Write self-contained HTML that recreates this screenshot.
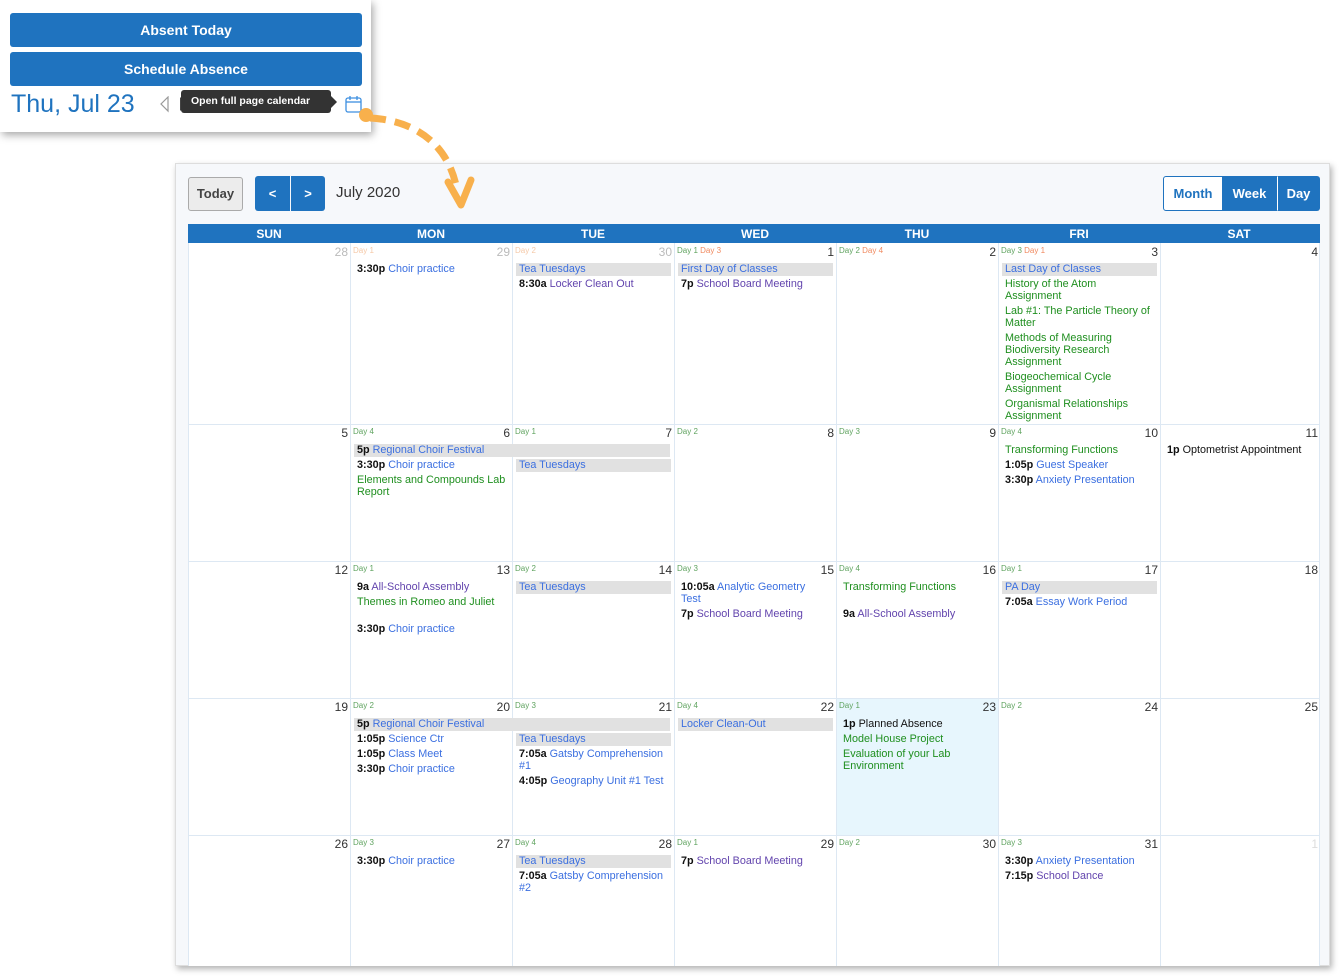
<!DOCTYPE html>
<html><head><meta charset="utf-8">
<style>
*{box-sizing:border-box;margin:0;padding:0}
body{width:1341px;height:976px;background:#fff;position:relative;overflow:hidden;font-family:"Liberation Sans",sans-serif;}
.pop{position:absolute;left:0;top:0;width:371px;height:132px;background:#fff;box-shadow:2px 3px 8px rgba(0,0,0,.35);}
.btn{position:absolute;left:10px;width:352px;height:34px;background:#1f73bf;border-radius:3px;color:#fff;font-weight:bold;font-size:14px;text-align:center;line-height:34px;}
.date{position:absolute;left:11px;top:90px;font-size:25px;color:#1f73bf;}
.tip{position:absolute;left:181px;top:90px;width:150px;height:23px;background:#333;border-radius:3px;color:#fff;font-weight:bold;font-size:10.5px;line-height:23px;padding-left:10px;}
.tip:after{content:"";position:absolute;right:-6px;top:6px;border-left:6px solid #333;border-top:6px solid transparent;border-bottom:6px solid transparent;}
.panel{position:absolute;left:175px;top:163px;width:1155px;height:803px;background:#f6f8fb;border:1px solid #ddd;box-shadow:2px 3px 6px rgba(0,0,0,.3);}
.today{position:absolute;left:188px;top:177px;width:55px;height:34px;background:#ececec;border:1px solid #aaa;border-radius:3px;font-weight:bold;font-size:13px;color:#444;text-align:center;line-height:32px;}
.nav{position:absolute;top:176px;height:35px;background:#1f73bf;color:#fff;font-weight:bold;font-size:13px;text-align:center;line-height:35px;}
.title{position:absolute;left:336px;top:184px;font-size:15px;color:#333;}
.vw{position:absolute;top:176px;height:35px;font-weight:bold;font-size:13px;text-align:center;line-height:33px;color:#fff;background:#1f73bf;border:1px solid #1f73bf;}
.hdr{position:absolute;left:188px;top:224px;width:1132px;height:19px;background:#1f73bf;}
.hdr div{position:absolute;top:0;width:162px;text-align:center;color:#fff;font-weight:bold;font-size:12px;line-height:20px;}
.grid{position:absolute;left:188px;top:243px;width:1132px;height:723px;background:#fff;}
.vl{position:absolute;top:243px;height:723px;width:1px;background:#dde8f3;}
.hl{position:absolute;left:188px;width:1132px;height:1px;background:#dde8f3;}
.n{position:absolute;font-size:12px;color:#333;text-align:right;width:40px;line-height:14px;}
.g{color:#bbb}
.d{position:absolute;font-size:8px;line-height:10px;color:#5fa35f;}
.o{color:#f08a60}.lo{color:#f5c9a8}
.e{position:absolute;font-size:10.8px;line-height:12px;width:152px;color:#3b6fe0;white-space:nowrap;margin-top:1px}
.e b{color:#111;}
.p{color:#6244ad}.k{color:#111}.gr{color:#1f8f1f;white-space:normal}
.b{position:absolute;background:#e1e1e1;height:13px;font-size:10.8px;line-height:13px;padding-left:3px;color:#3b6fe0;width:155px;margin-top:1px}
</style></head><body>

<div class="panel"></div>
<div class="today">Today</div>
<div class="nav" style="left:255px;width:35px;border-radius:3px 0 0 3px">&lt;</div>
<div class="nav" style="left:291px;width:34px;border-radius:0 3px 3px 0">&gt;</div>
<div class="title">July 2020</div>
<div class="vw" style="left:1163px;width:60px;background:#fff;color:#1f73bf;border-radius:3px 0 0 3px">Month</div>
<div class="vw" style="left:1222px;width:55px">Week</div>
<div class="vw" style="left:1277px;width:43px;border-left:1px solid #fff;border-radius:0 3px 3px 0">Day</div>

<div class="hdr">
<div style="left:0">SUN</div><div style="left:162px">MON</div><div style="left:324px">TUE</div><div style="left:486px">WED</div><div style="left:648px">THU</div><div style="left:810px">FRI</div><div style="left:970px">SAT</div>
</div>
<div class="grid"></div>
<div style="position:absolute;left:837px;top:699px;width:161px;height:136px;background:#e7f6fd"></div>
<div class="vl" style="left:188px"></div><div class="vl" style="left:350px"></div><div class="vl" style="left:512px"></div><div class="vl" style="left:674px"></div><div class="vl" style="left:836px"></div><div class="vl" style="left:998px"></div><div class="vl" style="left:1160px"></div><div class="vl" style="left:1319px"></div>
<div class="hl" style="top:424px"></div><div class="hl" style="top:561px"></div><div class="hl" style="top:698px"></div><div class="hl" style="top:835px"></div>

<!-- Row 1 -->
<div class="n g" style="left:308px;top:245px">28</div>
<div class="d lo" style="left:353px;top:246px">Day 1</div><div class="n g" style="left:470px;top:245px">29</div>
<div class="d lo" style="left:515px;top:246px">Day 2</div><div class="n g" style="left:632px;top:245px">30</div>
<div class="d" style="left:677px;top:246px">Day 1 <span class="o">Day 3</span></div><div class="n" style="left:794px;top:245px">1</div>
<div class="d" style="left:839px;top:246px">Day 2 <span class="o">Day 4</span></div><div class="n" style="left:956px;top:245px">2</div>
<div class="d" style="left:1001px;top:246px">Day 3 <span class="o">Day 1</span></div><div class="n" style="left:1118px;top:245px">3</div>
<div class="n" style="left:1278px;top:245px">4</div>

<div class="e" style="left:357px;top:262px"><b>3:30p</b> Choir practice</div>
<div class="b" style="left:516px;top:262px">Tea Tuesdays</div>
<div class="e p" style="left:519px;top:277px"><b>8:30a</b> Locker Clean Out</div>
<div class="b p" style="left:678px;top:262px">First Day of Classes</div>
<div class="e p" style="left:681px;top:277px"><b>7p</b> School Board Meeting</div>
<div class="b p" style="left:1002px;top:262px">Last Day of Classes</div>
<div class="e gr" style="left:1005px;top:277px">History of the Atom<br>Assignment</div>
<div class="e gr" style="left:1005px;top:304px">Lab #1: The Particle Theory of<br>Matter</div>
<div class="e gr" style="left:1005px;top:331px">Methods of Measuring<br>Biodiversity Research<br>Assignment</div>
<div class="e gr" style="left:1005px;top:370px">Biogeochemical Cycle<br>Assignment</div>
<div class="e gr" style="left:1005px;top:397px">Organismal Relationships<br>Assignment</div>

<!-- Row 2 -->
<div class="n" style="left:308px;top:426px">5</div>
<div class="d" style="left:353px;top:427px">Day 4</div><div class="n" style="left:470px;top:426px">6</div>
<div class="d" style="left:515px;top:427px">Day 1</div><div class="n" style="left:632px;top:426px">7</div>
<div class="d" style="left:677px;top:427px">Day 2</div><div class="n" style="left:794px;top:426px">8</div>
<div class="d" style="left:839px;top:427px">Day 3</div><div class="n" style="left:956px;top:426px">9</div>
<div class="d" style="left:1001px;top:427px">Day 4</div><div class="n" style="left:1118px;top:426px">10</div>
<div class="n" style="left:1278px;top:426px">11</div>

<div class="b" style="left:354px;top:443px;width:316px"><b style="color:#111">5p</b> Regional Choir Festival</div>
<div class="e" style="left:357px;top:458px"><b>3:30p</b> Choir practice</div>
<div class="e gr" style="left:357px;top:473px">Elements and Compounds Lab<br>Report</div>
<div class="b" style="left:516px;top:458px">Tea Tuesdays</div>
<div class="e gr" style="left:1005px;top:443px">Transforming Functions</div>
<div class="e" style="left:1005px;top:458px"><b>1:05p</b> Guest Speaker</div>
<div class="e" style="left:1005px;top:473px"><b>3:30p</b> Anxiety Presentation</div>
<div class="e k" style="left:1167px;top:443px"><b>1p</b> Optometrist Appointment</div>

<!-- Row 3 -->
<div class="n" style="left:308px;top:563px">12</div>
<div class="d" style="left:353px;top:564px">Day 1</div><div class="n" style="left:470px;top:563px">13</div>
<div class="d" style="left:515px;top:564px">Day 2</div><div class="n" style="left:632px;top:563px">14</div>
<div class="d" style="left:677px;top:564px">Day 3</div><div class="n" style="left:794px;top:563px">15</div>
<div class="d" style="left:839px;top:564px">Day 4</div><div class="n" style="left:956px;top:563px">16</div>
<div class="d" style="left:1001px;top:564px">Day 1</div><div class="n" style="left:1118px;top:563px">17</div>
<div class="n" style="left:1278px;top:563px">18</div>

<div class="e p" style="left:357px;top:580px"><b>9a</b> All-School Assembly</div>
<div class="e gr" style="left:357px;top:595px">Themes in Romeo and Juliet</div>
<div class="e" style="left:357px;top:622px"><b>3:30p</b> Choir practice</div>
<div class="b" style="left:516px;top:580px">Tea Tuesdays</div>
<div class="e" style="left:681px;top:580px"><b>10:05a</b> Analytic Geometry<br>Test</div>
<div class="e p" style="left:681px;top:607px"><b>7p</b> School Board Meeting</div>
<div class="e gr" style="left:843px;top:580px">Transforming Functions</div>
<div class="e p" style="left:843px;top:607px"><b>9a</b> All-School Assembly</div>
<div class="b p" style="left:1002px;top:580px">PA Day</div>
<div class="e" style="left:1005px;top:595px"><b>7:05a</b> Essay Work Period</div>

<!-- Row 4 -->
<div class="n" style="left:308px;top:700px">19</div>
<div class="d" style="left:353px;top:701px">Day 2</div><div class="n" style="left:470px;top:700px">20</div>
<div class="d" style="left:515px;top:701px">Day 3</div><div class="n" style="left:632px;top:700px">21</div>
<div class="d" style="left:677px;top:701px">Day 4</div><div class="n" style="left:794px;top:700px">22</div>
<div class="d" style="left:839px;top:701px">Day 1</div><div class="n" style="left:956px;top:700px">23</div>
<div class="d" style="left:1001px;top:701px">Day 2</div><div class="n" style="left:1118px;top:700px">24</div>
<div class="n" style="left:1278px;top:700px">25</div>

<div class="b" style="left:354px;top:717px;width:316px"><b style="color:#111">5p</b> Regional Choir Festival</div>
<div class="e" style="left:357px;top:732px"><b>1:05p</b> Science Ctr</div>
<div class="e" style="left:357px;top:747px"><b>1:05p</b> Class Meet</div>
<div class="e" style="left:357px;top:762px"><b>3:30p</b> Choir practice</div>
<div class="b" style="left:516px;top:732px">Tea Tuesdays</div>
<div class="e" style="left:519px;top:747px"><b>7:05a</b> Gatsby Comprehension<br>#1</div>
<div class="e" style="left:519px;top:774px"><b>4:05p</b> Geography Unit #1 Test</div>
<div class="b p" style="left:678px;top:717px">Locker Clean-Out</div>
<div class="e k" style="left:843px;top:717px"><b>1p</b> Planned Absence</div>
<div class="e gr" style="left:843px;top:732px">Model House Project</div>
<div class="e gr" style="left:843px;top:747px">Evaluation of your Lab<br>Environment</div>

<!-- Row 5 -->
<div class="n" style="left:308px;top:837px">26</div>
<div class="d" style="left:353px;top:838px">Day 3</div><div class="n" style="left:470px;top:837px">27</div>
<div class="d" style="left:515px;top:838px">Day 4</div><div class="n" style="left:632px;top:837px">28</div>
<div class="d" style="left:677px;top:838px">Day 1</div><div class="n" style="left:794px;top:837px">29</div>
<div class="d" style="left:839px;top:838px">Day 2</div><div class="n" style="left:956px;top:837px">30</div>
<div class="d" style="left:1001px;top:838px">Day 3</div><div class="n" style="left:1118px;top:837px">31</div>
<div class="n g" style="left:1278px;top:837px;color:#ddd">1</div>

<div class="e" style="left:357px;top:854px"><b>3:30p</b> Choir practice</div>
<div class="b" style="left:516px;top:854px">Tea Tuesdays</div>
<div class="e" style="left:519px;top:869px"><b>7:05a</b> Gatsby Comprehension<br>#2</div>
<div class="e p" style="left:681px;top:854px"><b>7p</b> School Board Meeting</div>
<div class="e" style="left:1005px;top:854px"><b>3:30p</b> Anxiety Presentation</div>
<div class="e p" style="left:1005px;top:869px"><b>7:15p</b> School Dance</div>

<!-- Popup -->
<div class="pop">
<div class="btn" style="top:13px">Absent Today</div>
<div class="btn" style="top:52px">Schedule Absence</div>
<div class="date">Thu, Jul 23</div>
<svg style="position:absolute;left:158px;top:96px" width="30" height="18"><path d="M10 1 L3 8 L10 15 Z" fill="none" stroke="#999" stroke-width="1.2"/><path d="M22 1 L29 8 L22 15 Z" fill="#444"/></svg>
<div class="tip">Open full page calendar</div>
<svg style="position:absolute;left:344px;top:94px" width="20" height="20"><rect x="2" y="4" width="15" height="14" rx="2" fill="none" stroke="#3d8fe0" stroke-width="1.3"/><line x1="2" y1="8" x2="17" y2="8" stroke="#3d8fe0" stroke-width="1.3"/><line x1="6" y1="2" x2="6" y2="6" stroke="#3d8fe0" stroke-width="1.3"/><line x1="13" y1="2" x2="13" y2="6" stroke="#3d8fe0" stroke-width="1.3"/></svg>
</div>

<svg style="position:absolute;left:0;top:0" width="1341" height="976">
<circle cx="366" cy="115" r="7" fill="#f8b04c"/>
<path d="M370 118 C 410 120, 448 140, 457 190" fill="none" stroke="#f8b04c" stroke-width="7" stroke-dasharray="16 9"/>
<path d="M448 182 L461 205 L471 180" fill="none" stroke="#f8b04c" stroke-width="7" stroke-linecap="round" stroke-linejoin="round"/>
</svg>
</body></html>
